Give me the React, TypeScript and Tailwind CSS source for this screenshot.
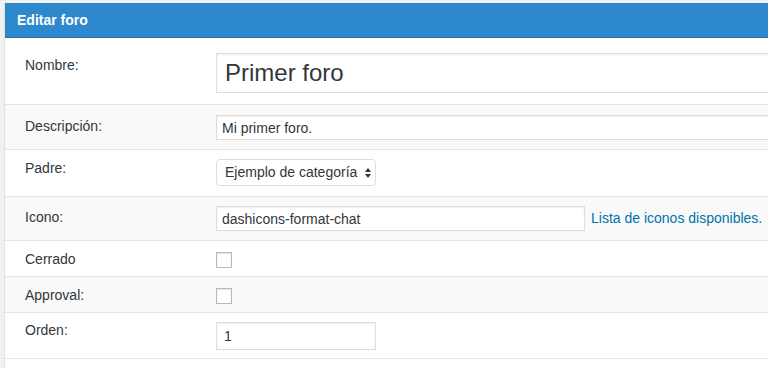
import React from "react";

const font = { fontFamily: '"Liberation Sans", Arial, sans-serif' };

function Row({
  label,
  h,
  lpt,
  fpt,
  gray,
  children,
}: {
  label: string;
  h: string;
  lpt: string;
  fpt: string;
  gray?: boolean;
  children: React.ReactNode;
}) {
  return (
    <div className={`flex border-b border-[#e5e5e5] ${gray ? "bg-[#f9f9f9]" : "bg-white"} ${h}`}>
      <div className={`w-[211px] shrink-0 pl-[20px] text-[14px] leading-4 text-[#32373c] ${lpt}`}>{label}</div>
      <div className={`flex min-w-0 flex-1 items-start ${fpt}`}>{children}</div>
    </div>
  );
}

export default function App() {
  return (
    <div className="h-[368px] w-[768px] overflow-hidden bg-[#f1f1f1] pt-[3px] pl-[4px]" style={font}>
      <div className="h-full border-l border-[#e1e1e1] bg-white">
        <div className="flex h-[35px] items-center border-b border-[#1f6fa8] bg-[#2e88cc] pl-[12px] text-[14px] font-bold text-white">
          Editar foro
        </div>
        <Row label="Nombre:" h="h-[67px]" lpt="pt-[19px]" fpt="pt-[15px]">
          <input
            readOnly
            value="Primer foro"
            className="h-[40px] w-[600px] shrink-0 border border-[#dddddd] bg-white px-[8px] text-[24px] text-[#32373c] shadow-[inset_0_1px_2px_rgba(0,0,0,0.07)] outline-none"
            style={font}
          />
        </Row>
        <Row label="Descripción:" h="h-[45px]" lpt="pt-[13px]" fpt="pt-[10px]" gray>
          <input
            readOnly
            value="Mi primer foro."
            className="h-[25px] w-[600px] shrink-0 border border-[#dddddd] bg-white px-[5px] text-[14px] text-[#32373c] shadow-[inset_0_1px_2px_rgba(0,0,0,0.07)] outline-none"
            style={font}
          />
        </Row>
        <Row label="Padre:" h="h-[47px]" lpt="pt-[10px]" fpt="pt-[9px]">
          <div className="flex h-[27px] w-[160px] items-center justify-between rounded-[4px] border border-[#dddddd] bg-white pl-[8px] pr-[4px] text-[14px] text-[#32373c]">
            <span>Ejemplo de categoría</span>
            <svg width="6" height="10" viewBox="0 0 6 10">
              <path d="M3 0 L6 4 L0 4 Z" fill="#333" />
              <path d="M3 10 L6 6 L0 6 Z" fill="#333" />
            </svg>
          </div>
        </Row>
        <Row label="Icono:" h="h-[44px]" lpt="pt-[12px]" fpt="pt-[9px]" gray>
          <input
            readOnly
            value="dashicons-format-chat"
            className="h-[25px] w-[369px] shrink-0 border border-[#dddddd] bg-white px-[5px] text-[14px] text-[#32373c] shadow-[inset_0_1px_2px_rgba(0,0,0,0.07)] outline-none"
            style={font}
          />
          <a className="ml-[6px] mt-[4px] whitespace-nowrap text-[14px] leading-4 text-[#0073aa]">Lista de iconos disponibles.</a>
        </Row>
        <Row label="Cerrado" h="h-[36px]" lpt="pt-[10px]" fpt="pt-[11px]">
          <div className="h-[16px] w-[16px] border border-[#b4b9be] bg-white shadow-[inset_0_1px_2px_rgba(0,0,0,0.1)]" />
        </Row>
        <Row label="Approval:" h="h-[36px]" lpt="pt-[10px]" fpt="pt-[11px]" gray>
          <div className="h-[16px] w-[16px] border border-[#b4b9be] bg-white shadow-[inset_0_1px_2px_rgba(0,0,0,0.1)]" />
        </Row>
        <Row label="Orden:" h="h-[46px]" lpt="pt-[9px]" fpt="pt-[9px]">
          <input
            readOnly
            value="1"
            className="h-[28px] w-[160px] shrink-0 border border-[#dddddd] bg-white px-[7px] text-[14px] text-[#32373c] shadow-[inset_0_1px_2px_rgba(0,0,0,0.07)] outline-none"
            style={font}
          />
        </Row>
      </div>
    </div>
  );
}
